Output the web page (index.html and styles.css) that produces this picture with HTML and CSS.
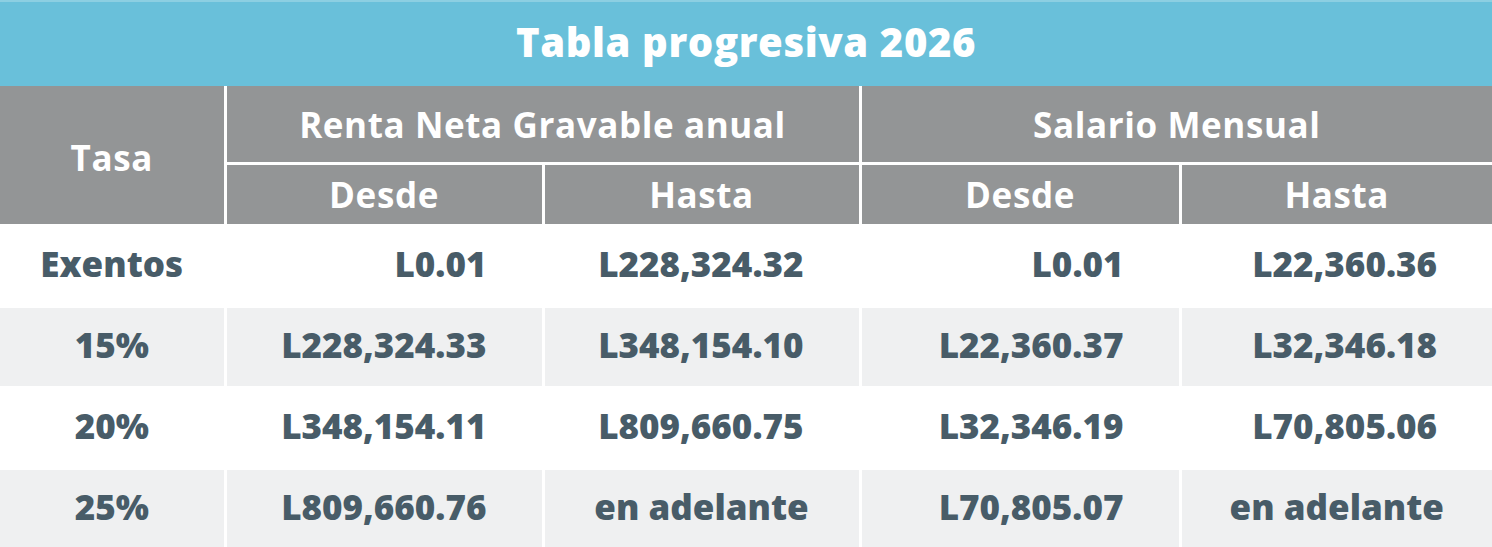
FILE: index.html
```html
<!DOCTYPE html>
<html lang="es">
<head>
<meta charset="utf-8">
<title>Tabla progresiva 2026</title>
<link rel="stylesheet" href="styles.css">
</head>
<body>
<div class="wrap">
  <div class="title">Tabla progresiva 2026</div>
  <table class="tbl">
    <colgroup>
      <col class="c1"><col class="c2"><col class="c3"><col class="c4"><col class="c5">
    </colgroup>
    <thead>
      <tr class="h1">
        <th rowspan="2" class="tasa">Tasa</th>
        <th colspan="2">Renta Neta Gravable anual</th>
        <th colspan="2">Salario Mensual</th>
      </tr>
      <tr class="h2">
        <th>Desde</th><th>Hasta</th><th>Desde</th><th>Hasta</th>
      </tr>
    </thead>
    <tbody>
      <tr>
        <td class="rate">Exentos</td>
        <td class="num">L0.01</td>
        <td class="num">L228,324.32</td>
        <td class="num">L0.01</td>
        <td class="num">L22,360.36</td>
      </tr>
      <tr class="alt">
        <td class="rate">15%</td>
        <td class="num">L228,324.33</td>
        <td class="num">L348,154.10</td>
        <td class="num">L22,360.37</td>
        <td class="num">L32,346.18</td>
      </tr>
      <tr>
        <td class="rate">20%</td>
        <td class="num">L348,154.11</td>
        <td class="num">L809,660.75</td>
        <td class="num">L32,346.19</td>
        <td class="num">L70,805.06</td>
      </tr>
      <tr class="alt">
        <td class="rate">25%</td>
        <td class="num">L809,660.76</td>
        <td class="txt">en adelante</td>
        <td class="num">L70,805.07</td>
        <td class="txt">en adelante</td>
      </tr>
    </tbody>
  </table>
</div>
</body>
</html>
```
FILE: styles.css
```css
html, body {
  margin: 0;
  padding: 0;
  background: #ffffff;
}
.wrap {
  width: 1492px;
  height: 547px;
  overflow: hidden;
  font-family: "Open Sans", "DejaVu Sans", sans-serif;
}
.title {
  height: 86px;
  box-sizing: border-box;
  border-top: 2px solid #8ccfe2;
  background: #69c0da;
  color: #ffffff;
  font-weight: 800;
  font-size: 40px;
  display: flex;
  align-items: center;
  justify-content: center;
  padding-bottom: 6px;
  letter-spacing: 0.6px;
}
.tbl {
  width: 1492px;
  border-collapse: collapse;
  border-style: hidden;
  table-layout: fixed;
}
.c1 { width: 225px; }
.c2 { width: 318px; }
.c3 { width: 317px; }
.c4 { width: 320px; }
.c5 { width: 312px; }
.tbl th, .tbl td {
  border: 3px solid #ffffff;
  padding: 0;
}
.tbl th {
  background: #939596;
  color: #ffffff;
  font-weight: 700;
  font-size: 35px;
  letter-spacing: 0.6px;
  text-align: center;
}
.h1 th { height: 76px; }
.h1 th.tasa { padding-top: 4px; }
.h2 th { height: 59px; }
.tbl td {
  height: 73px;
  padding-bottom: 5px;
  color: #485c68;
  font-weight: 800;
  font-size: 35px;
  background: #ffffff;
}
.tbl tr.alt td { background: #eff0f1; }
.tbl td.rate { text-align: center; }
.tbl td.num { text-align: right; padding-right: 55px; }
.tbl td.txt { text-align: center; }
```
